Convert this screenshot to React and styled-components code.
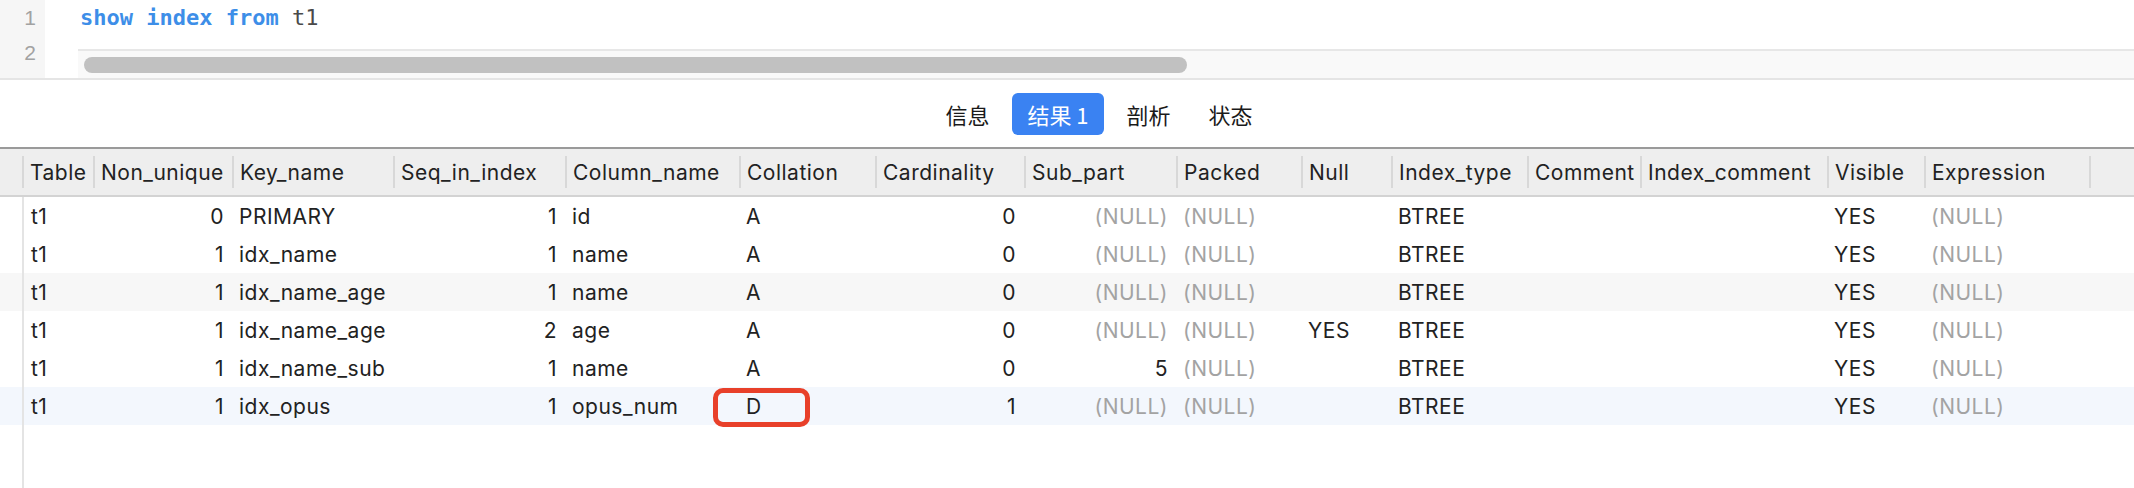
import React from 'react';
import styled, {createGlobalStyle} from 'styled-components';

const GlobalStyle = createGlobalStyle`
    html, body {
        margin: 0;
        padding: 0;
        background: #fff;
    }
    body {
        font-family: Inter, "Noto Sans", "Liberation Sans", sans-serif;
        color: #222;
    }
`;

const columns = [
    {name: 'Table', width: 71},
    {name: 'Non_unique', width: 139, right: true},
    {name: 'Key_name', width: 161},
    {name: 'Seq_in_index', width: 172, right: true},
    {name: 'Column_name', width: 174},
    {name: 'Collation', width: 136},
    {name: 'Cardinality', width: 149, right: true},
    {name: 'Sub_part', width: 152, right: true},
    {name: 'Packed', width: 125},
    {name: 'Null', width: 90},
    {name: 'Index_type', width: 136},
    {name: 'Comment', width: 113},
    {name: 'Index_comment', width: 187},
    {name: 'Visible', width: 97},
    {name: 'Expression', width: 165}
];

const N = null;

const rows = [
    ['t1', '0', 'PRIMARY', '1', 'id', 'A', '0', N, N, '', 'BTREE', '', '', 'YES', N],
    ['t1', '1', 'idx_name', '1', 'name', 'A', '0', N, N, '', 'BTREE', '', '', 'YES', N],
    ['t1', '1', 'idx_name_age', '1', 'name', 'A', '0', N, N, '', 'BTREE', '', '', 'YES', N],
    ['t1', '1', 'idx_name_age', '2', 'age', 'A', '0', N, N, 'YES', 'BTREE', '', '', 'YES', N],
    ['t1', '1', 'idx_name_sub', '1', 'name', 'A', '0', '5', N, '', 'BTREE', '', '', 'YES', N],
    ['t1', '1', 'idx_opus', '1', 'opus_num', 'D', '1', N, N, '', 'BTREE', '', '', 'YES', N]
];

const gridTemplate = `22px ${columns.map(c => c.width + 'px').join(' ')} 1fr`;

const Page = styled.div`
    display: flex;
    flex-direction: column;
    width: 2134px;
    height: 488px;
    overflow: hidden;
`;

const Editor = styled.div`
    position: relative;
    display: flex;
    height: 78px;
    border-bottom: 2px solid #e5e5e5;
`;

const Gutter = styled.div`
    width: 45px;
    background: #f6f6f6;
    padding-right: 9px;
    box-sizing: border-box;
    text-align: right;
    font-family: "Liberation Sans", sans-serif;
    font-size: 21px;
    line-height: 35px;
    color: #a2a2a2;
`;

const Code = styled.div`
    padding-left: 35px;
    font-family: "DejaVu Sans Mono", monospace;
    font-size: 22px;
    line-height: 35px;
    color: #4a4a4a;
    white-space: pre;
`;

const Keyword = styled.span`
    color: #3d8ee8;
    font-weight: bold;
`;

const ScrollTrack = styled.div`
    position: absolute;
    left: 78px;
    right: 0;
    top: 49px;
    bottom: 0;
    background: #f9f9f9;
    border-top: 2px solid #e7e7e7;
    padding: 6px 0 0 6px;
`;

const ScrollThumb = styled.div`
    width: 1103px;
    height: 16px;
    border-radius: 8px;
    background: #c1c1c1;
`;

const TabBar = styled.div`
    display: flex;
    align-items: center;
    justify-content: center;
    gap: 8px;
    height: 67px;
    padding-left: 64px;
`;

const Tab = styled.div`
    display: flex;
    align-items: center;
    height: 42px;
    padding: 0 15px;
    border-radius: 6px;
    font-family: "Noto Sans CJK SC", Inter, sans-serif;
    font-size: 22px;
    color: ${p => p.$active ? '#fff' : '#1a1a1a'};
    background: ${p => p.$active ? '#3a82f2' : 'transparent'};
`;

const HeaderRow = styled.div`
    display: grid;
    grid-template-columns: ${gridTemplate};
    height: 46px;
    background: #eeeeee;
    border-top: 2px solid #9a9a9a;
    border-bottom: 2px solid #d3d3d3;
`;

const HeadCell = styled.div`
    display: flex;
    align-items: center;
    margin: 7px 0;
    padding-left: 6px;
    border-left: ${p => p.$plain ? 'none' : '2px solid #d8d8d8'};
    font-size: 21px;
    letter-spacing: 0.5px;
    color: #222;
    white-space: nowrap;
    overflow: hidden;
`;

const Row = styled.div`
    position: relative;
    display: grid;
    grid-template-columns: ${gridTemplate};
    height: 38px;
    background: ${p => p.$bg || '#fff'};
`;

const Cell = styled.div`
    display: flex;
    align-items: center;
    justify-content: ${p => p.$right ? 'flex-end' : 'flex-start'};
    padding: 0 8px 0 7px;
    border-left: ${p => p.$first ? '2px solid #e4e4e4' : 'none'};
    font-size: 21px;
    letter-spacing: 0.5px;
    color: ${p => p.$null ? '#a3a3a3' : '#222'};
    white-space: nowrap;
    overflow: hidden;
`;

const Filler = styled.div`
    flex: 1;
    margin-left: 22px;
    border-left: 2px solid #e4e4e4;
`;

const Mark = styled.div`
    position: absolute;
    left: 713px;
    top: 1px;
    width: 97px;
    height: 39px;
    box-sizing: border-box;
    border: 5px solid #e8402a;
    border-radius: 10px;
`;

const rowBg = i => {
    if (i === 2) return '#f7f7f7';
    if (i === 5) return '#f3f7fd';
    return null;
};

export default function App() {
    return (
        <Page>
            <GlobalStyle />
            <Editor>
                <Gutter>
                    <div>1</div>
                    <div>2</div>
                </Gutter>
                <Code>
                    <div><Keyword>show</Keyword> <Keyword>index</Keyword> <Keyword>from</Keyword> t1</div>
                    <div> </div>
                </Code>
                <ScrollTrack>
                    <ScrollThumb />
                </ScrollTrack>
            </Editor>

            <TabBar>
                <Tab>信息</Tab>
                <Tab $active>结果 1</Tab>
                <Tab>剖析</Tab>
                <Tab>状态</Tab>
            </TabBar>

            <HeaderRow>
                <HeadCell $plain />
                {columns.map(c => (
                    <HeadCell key={c.name}>{c.name}</HeadCell>
                ))}
                <HeadCell />
            </HeaderRow>

            {rows.map((r, i) => (
                <Row key={i} $bg={rowBg(i)}>
                    <div />
                    {r.map((v, j) => (
                        <Cell
                            key={j}
                            $first={j === 0}
                            $right={columns[j].right}
                            $null={v === null}>
                            {v === null ? '(NULL)' : v}
                        </Cell>
                    ))}
                    <div />
                    {i === 5 ? <Mark /> : null}
                </Row>
            ))}
            <Filler />
        </Page>
    );
}
